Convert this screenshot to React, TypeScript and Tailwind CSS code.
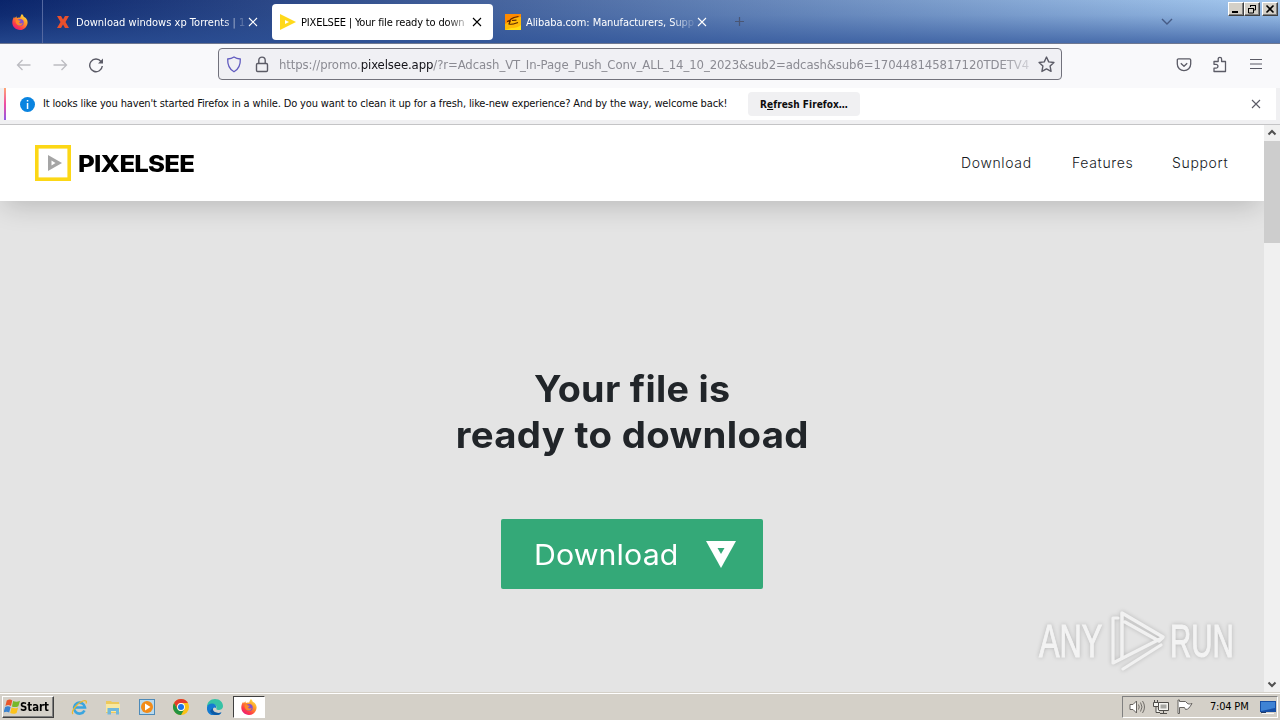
import React from 'react';

const CloseIcon: React.FC<{ className?: string }> = ({ className }) => (
  <svg className={className} width="10" height="10" viewBox="0 0 10 10" fill="none" stroke="currentColor" strokeWidth="1.1">
    <path d="M1 1l8 8M9 1L1 9" />
  </svg>
);

const FirefoxIcon: React.FC = () => (
  <svg width="16" height="16" viewBox="0 0 16 16">
    <defs>
      <linearGradient id="fox" x1="0.9" y1="0" x2="0.2" y2="1">
        <stop offset="0" stopColor="#fff04a" />
        <stop offset="0.4" stopColor="#ff9a26" />
        <stop offset="0.75" stopColor="#ff3b47" />
        <stop offset="1" stopColor="#e31587" />
      </linearGradient>
    </defs>
    <path d="M10 0c1 1 1.600 2 1.900 3 1.100.3 2 .9 2.600 2 .8 1.200 1.200 2.400 1.100 3.700C15.300 12.800 12 16 8 16 3.700 16 .3 12.800.3 8.600.3 6.500 1 4.500 2.200 2.800l.4 1.500C3.200 3.500 3.900 2.700 4.500 2.200l.3 1.900c1-.5 2.200-.7 3.300-.3C8.500 2.300 9 1 10 0z" fill="url(#fox)" />
    <circle cx="8.200" cy="8.600" r="3.500" fill="#8150cf" />
    <path d="M3.500 6.500c1.200-.9 2.500-.9 3.500-.1l1.800.3c-.2 1-1.500 1-1.700 1.700.5 1.300 2.300 1.200 3.600.3-.5 2.300-2.400 3.300-4.100 2.700C4.700 10.800 3.600 9 3.500 6.500z" fill="#ff8a28" />
  </svg>
);

const AlibabaIcon: React.FC = () => (
  <svg width="16" height="16" viewBox="0 0 16 16">
    <path d="M0 0h16v16H0z" fill="#ffba08" />
    <path d="M0 0h16v3C9 3 7 7 4 8l-4 2z" fill="#ff8a00" />
    <path d="M0 16c3-1 6-2 8-2s6-1 8-3v5z" fill="#ffde17" />
    <path d="M2 7.500c2-.2 3-1 4-2.500 2-1.500 4.500-2 7.500-2.500M5.500 6.500L4 10c3 1 6-.5 9-1.500M7 6.500l4.500-.3" fill="none" stroke="#5a2700" strokeWidth="1.200" />
  </svg>
);

interface TabProps {
  icon: React.ReactNode;
  label: string;
  className: string;
  labelClassName: string;
}

const Tab: React.FC<TabProps> = ({ icon, label, className, labelClassName }) => (
  <div className={`flex h-9 shrink-0 items-center ${className}`}>
    <span className="flex w-4 shrink-0 justify-center">{icon}</span>
    <span className={`ml-[5px] shrink-0 pt-[3px] whitespace-nowrap [mask-image:linear-gradient(to_right,#000_86%,rgba(0,0,0,0.1))] ${labelClassName}`}>
      {label}
    </span>
    <CloseIcon className="ml-[2px] shrink-0" />
  </div>
);

const WindowButton: React.FC<{ children: React.ReactNode; className?: string }> = ({ children, className = '' }) => (
  <button
    className={`flex h-[14px] items-center justify-center border border-t-white border-r-[#404040] border-b-[#404040] border-l-white bg-[#d4d0c8] shadow-[inset_-1px_-1px_#808080] ${className}`}
  >
    <svg width="10" height="10" viewBox="0 0 10 10" fill="none" stroke="#000">
      {children}
    </svg>
  </button>
);

const TabStrip: React.FC = () => (
  <div className="flex h-11 items-center border-b border-[#6f7890] bg-[linear-gradient(to_bottom,rgba(45,85,160,0)_0%,rgba(45,85,155,0.15)_35%,rgba(45,82,152,0.72)_100%),linear-gradient(to_right,#0a246a,#a6caf0)] text-[11px] text-white">
    <div className="flex h-full w-[43px] shrink-0 items-center justify-center border-r border-[#5468a0] pr-[2px]">
      <FirefoxIcon />
    </div>
    <Tab
      className="ml-3 w-[205px]"
      labelClassName="w-[170px] tracking-[0.02px]"
      label="Download windows xp Torrents | 1"
      icon={
        <svg width="12" height="12" viewBox="0 0 12 12">
          <path d="M0 0h4l2 3.500L8 0h4L8.500 6l3.500 6H8L6 8.500 4 12H0l3.500-6z" fill="#e8502d" />
        </svg>
      }
    />
    <Tab
      className="ml-3 w-[221px] rounded bg-white pl-2 text-black"
      labelClassName="w-[169px] -tracking-[0.17px]"
      label="PIXELSEE | Your file ready to down"
      icon={
        <svg width="16" height="16" viewBox="0 0 16 16">
          <path d="M0 0l16 8-16 8z" fill="#ffd91a" />
          <path d="M5 6l4 2-4 2z" fill="#fff" />
        </svg>
      }
    />
    <Tab
      className="ml-3 w-[210px]"
      labelClassName="w-[169px] -tracking-[0.08px]"
      label="Alibaba.com: Manufacturers, Supp"
      icon={<AlibabaIcon />}
    />
    <svg className="ml-[19px] shrink-0" width="11" height="11" viewBox="0 0 11 11" stroke="#4a5675" strokeWidth="1.200">
      <path d="M5.500 1v9M1 5.500h9" />
    </svg>
    <svg className="mr-[54px] ml-auto shrink-0" width="14" height="8" viewBox="0 0 14 8" fill="none" stroke="#465b85" strokeWidth="1.400">
      <path d="M2 1l5 5 5-5" />
    </svg>
    <div className="mr-[2px] flex shrink-0 self-start pt-[2px]">
      <WindowButton className="w-4">
        <path d="M1 8h6" strokeWidth="2" />
      </WindowButton>
      <WindowButton className="w-4">
        <path d="M3.500 3V1.500h5V6H7M3 1.500h6M1.500 4.500h5V9h-5zM1 4.500h6" />
      </WindowButton>
      <WindowButton className="ml-[2px] w-4">
        <path d="M1.500 1.500l7 7M8.500 1.500l-7 7" strokeWidth="1.600" />
      </WindowButton>
    </div>
  </div>
);

const NavBar: React.FC = () => (
  <div className="flex h-11 items-start bg-[#f9f9fb] pt-1 text-[#5b5b66]">
    <svg className="mt-[9px] ml-4 shrink-0 text-[#bcbcc1]" width="16" height="16" viewBox="0 0 16 16" fill="none" stroke="currentColor" strokeWidth="1.300">
      <path d="M14.500 8H1.500M6.500 3L1.500 8l5 5" />
    </svg>
    <svg className="mt-[9px] ml-5 shrink-0 text-[#bcbcc1]" width="16" height="16" viewBox="0 0 16 16" fill="none" stroke="currentColor" strokeWidth="1.300">
      <path d="M1.500 8h13M9.500 3l5 5-5 5" />
    </svg>
    <svg className="mt-[9px] ml-5 shrink-0" width="16" height="16" viewBox="0 0 16 16" fill="none" stroke="currentColor" strokeWidth="1.400">
      <path d="M13 4.500A6.300 6.300 0 1 0 14.300 9" />
      <path d="M15 1.500v5H10z" fill="currentColor" stroke="none" />
    </svg>
    <div className="ml-[114px] flex h-8 w-[844px] shrink-0 items-center rounded border border-[#72727c] bg-[#f0f0f4] pl-[7px]">
      <svg className="shrink-0" width="16" height="17" viewBox="0 0 16 17" fill="none" stroke="#625cc0" strokeWidth="1.300">
        <path d="M8 1c2 1.300 4 1.800 6.300 2 .3 6-1.300 10-6.300 12.800C3 13 1.400 9 1.700 3 4 2.800 6 2.300 8 1z" />
      </svg>
      <svg className="ml-3 shrink-0" width="16" height="17" viewBox="0 0 16 17" fill="none" stroke="currentColor" strokeWidth="1.400">
        <rect x="2.500" y="7.500" width="11" height="8" rx="1.200" />
        <path d="M4.800 7.500V4.300a3.200 3.200 0 0 1 6.400 0v3.200" />
      </svg>
      <div className="ml-[9px] w-[750px] shrink-0 pt-px text-[13px] tracking-[-0.1px] whitespace-nowrap text-[#8b8b93] [mask-image:linear-gradient(to_right,#000_96%,rgba(0,0,0,0.3))]">
        https://promo.<span className="text-[#15141a]">pixelsee.app</span>
        /?r=Adcash_VT_In-Page_Push_Conv_ALL_14_10_2023&amp;sub2=adcash&amp;sub6=170448145817120TDETV4
      </div>
      <svg className="ml-[9px] shrink-0" width="17" height="17" viewBox="0 0 16 16" fill="none" stroke="currentColor" strokeWidth="1.300" strokeLinejoin="round">
        <path d="M8 1l2.100 4.500 4.900.6-3.600 3.400.9 5L8 12.100l-4.300 2.400.9-5L1 6.100l4.900-.6z" />
      </svg>
    </div>
    <svg className="mt-[9px] ml-[114px] shrink-0" width="16" height="16" viewBox="0 0 16 16" fill="none" stroke="currentColor" strokeWidth="1.300" strokeLinejoin="round">
      <path d="M2.500 1.800h11c.8 0 1.200.4 1.200 1.200V7a6.700 6.700 0 0 1-13.400 0V3c0-.8.400-1.200 1.200-1.200z" />
      <path d="M4.800 6.200L8 9.200l3.200-3" />
    </svg>
    <svg className="mt-[8px] ml-5 shrink-0" width="16" height="17" viewBox="0 0 16 17" fill="none" stroke="currentColor" strokeWidth="1.300" strokeLinejoin="round">
      <path d="M2 15.500v-3.300h2a1.900 1.900 0 0 0 0-3.900H2V5.500h4.200V3a1.700 1.700 0 0 1 3.400 0v2.500H13.500v10z" />
    </svg>
    <svg className="mt-[8px] ml-5 shrink-0" width="16" height="16" viewBox="0 0 16 16" stroke="currentColor" strokeWidth="1.200">
      <path d="M2 3.500h12M2 8h12M2 12.500h12" />
    </svg>
  </div>
);

const NotificationBar: React.FC = () => (
  <div className="h-[37px] border-b border-[#c4c4c6] bg-[#f0f0f2]">
    <div className="ml-1 flex h-8 w-[1272px] items-center bg-white text-[11px] text-[#0c0c0d]">
      <div className="h-full w-[2px] bg-[linear-gradient(#ffa573,#ef4da2_50%,#9059e5)]" />
      <div className="ml-[14px] flex h-[15px] w-[15px] items-center justify-center rounded-full bg-[#0a84e0]">
        <svg width="3" height="9" viewBox="0 0 3 9" fill="#fff">
          <path d="M.8 0h1.500v1.600H.8zM.8 3h1.500v6H.8z" />
        </svg>
      </div>
      <p className="ml-2 w-[705px] whitespace-nowrap tracking-[-0.143px]">
        It looks like you haven't started Firefox in a while. Do you want to clean it up for a fresh, like-new experience? And by the way, welcome back!
      </p>
      <button className="flex h-6 w-28 items-center justify-center rounded bg-[#f0f0f2] text-[10px] font-bold tracking-[0.05px] whitespace-nowrap">
        R<u>e</u>fresh Firefox…
      </button>
      <CloseIcon className="mr-[15px] ml-auto text-[#5b5b66]" />
    </div>
  </div>
);

const SiteHeader: React.FC = () => (
  <header className="relative flex h-[76px] items-center bg-white pr-[35px] pl-[35px] font-[Inter] shadow-[0_8px_28px_-4px_rgba(0,0,0,0.2)]">
    <svg width="36" height="36" viewBox="0 0 36 36">
      <rect x="1.800" y="1.800" width="32.400" height="32.400" fill="#fff" stroke="#fcd716" strokeWidth="3.600" />
      <path d="M13 10l14 8-14 8z" fill="#a5a5a5" />
      <path d="M16.500 15.500l4 2.500-4 2.500z" fill="#fff" />
    </svg>
    <span className="ml-[7px] w-[110px] origin-left scale-x-[1.12] pt-[2px] text-[23px] font-extrabold tracking-[-0.7px] text-black">PIXELSEE</span>
    <nav className="ml-auto flex gap-10 pb-[2px] text-[14px] font-light text-[#15191d]">
      <a className="w-[71px] tracking-[0.65px]">Download</a>
      <a className="w-[60px] tracking-[0.65px]">Features</a>
      <a className="w-[57px] tracking-[0.65px]">Support</a>
    </nav>
  </header>
);

const Watermark: React.FC = () => (
  <div className="absolute top-[483px] left-[1039px] flex h-[66px] items-center font-['Liberation_Sans'] text-[46px] leading-none text-[#f3f3f3] [filter:drop-shadow(0_0_2px_rgba(0,0,0,0.2))]">
    <span className="w-[67px] origin-left scale-x-[0.67] [-webkit-text-stroke:1px_#f3f3f3]">ANY</span>
    <svg className="mx-[4px]" width="56" height="62" viewBox="0 0 56 62" fill="none" stroke="#f1f1f1" strokeWidth="3.5" strokeLinejoin="round" strokeLinecap="round">
      <path d="M12 48V3l41 24-4 4L15 12" />
      <path d="M8 8H3v45L52 28M13 59l38-24" strokeWidth="3.200" />
    </svg>
    <span className="w-[67px] origin-left scale-x-[0.64] [-webkit-text-stroke:1px_#f3f3f3]">RUN</span>
  </div>
);

const Scrollbar: React.FC = () => (
  <div className="flex w-4 flex-col items-center bg-[#f0f0f0]">
    <svg className="mt-1" width="10" height="7" viewBox="0 0 10 7" fill="none" stroke="#505050" strokeWidth="2">
      <path d="M1.500 5.500L5 2l3.500 3.500" />
    </svg>
    <div className="mt-[5px] h-[102px] w-full bg-[#cdcdcd]" />
    <svg className="mt-auto mb-1" width="10" height="7" viewBox="0 0 10 7" fill="none" stroke="#505050" strokeWidth="2">
      <path d="M1.500 1.500L5 5l3.500-3.500" />
    </svg>
  </div>
);

const PageContent: React.FC = () => (
  <div className="relative flex h-[567px] overflow-hidden">
    <main className="flex w-[1264px] flex-col overflow-hidden bg-[#e4e4e4] font-[Inter]">
      <SiteHeader />
      <div className="flex flex-col items-center pt-[165px]">
        <h1 className="text-center text-[37px] leading-[46px] font-bold text-[#212529]">
          <span className="block scale-x-[1.02] tracking-[0.3px]">Your file is</span>
          <span className="block scale-x-[1.037] tracking-[0.3px]">ready to download</span>
        </h1>
        <button className="mt-[61px] flex h-[70px] w-[262px] items-center rounded-[2px] bg-[#34a978] pl-[33px] text-white">
          <span className="w-[145px] origin-left scale-x-[1.045] pt-[2px] text-left text-[29px] tracking-[0.1px]">Download</span>
          <svg className="ml-[27px]" width="31" height="27" viewBox="0 0 31 27">
            <path d="M0 0h30L15 27z" fill="#fff" />
            <path d="M11.500 7h7L15 13z" fill="#34a978" />
          </svg>
        </button>
      </div>
    </main>
    <Scrollbar />
    <Watermark />
  </div>
);

const StartFlag: React.FC = () => (
  <svg className="shrink-0" width="16" height="16" viewBox="0.500 1.500 14.500 14">
    <path d="M3 2.500c2-1 3.500-1 5 0L6.800 7.500c-1.800-1-3.200-1-5 0z" fill="#e8562a" />
    <path d="M8.800 3c2 1 4 1 6.200-.2l-1.500 5c-2 1-4 1-5.800.2z" fill="#76b82a" />
    <path d="M1.500 8.500c1.800-1 3.300-1 5 0l-1.300 5c-1.800-1-3.400-1-5.200 0z" fill="#3b83d0" />
    <path d="M7.400 9c2 1 4 1 5.900-.1l-1.400 5c-2 1-4 1-5.800.1z" fill="#fcc21b" />
  </svg>
);

const Taskbar: React.FC = () => (
  <footer className="flex h-7 items-start border-t border-[#d4d0c8] bg-[#d4d0c8] text-[11px] text-black shadow-[inset_0_1px_#fff]">
    <button className="mt-[3px] ml-[2px] flex h-[22px] w-[52px] items-center border border-t-white border-r-[#404040] border-b-[#404040] border-l-white pl-[1px] text-[12px] font-bold shadow-[inset_-1px_-1px_#808080]">
      <StartFlag />
      <span className="origin-left scale-x-[0.94]">Start</span>
    </button>
    <svg className="mt-[6px] ml-[17px]" width="17" height="17" viewBox="0 0 17 17" fill="none">
      <path d="M13.500 11.500A5.500 5.500 0 1 1 14 8.500H4" stroke="#3aa5df" strokeWidth="2.600" />
      <path d="M2 15C-.5 13 6 4 12 2c3-1 4 .4 3 2.500" stroke="#edb92e" strokeWidth="1.300" />
    </svg>
    <svg className="mt-[6px] ml-[17px]" width="16" height="16" viewBox="0 0 16 16">
      <path d="M1 2h5l1 1h7v11H1z" fill="#edc95c" />
      <path d="M1 5h14v8H1z" fill="#f9e8a0" />
      <path d="M2.500 15.500V9h11.500v6.500h-3V12H6v3.500z" fill="#71b8dc" />
    </svg>
    <svg className="mt-[6px] ml-[18px]" width="16" height="16" viewBox="0 0 16 16">
      <rect x=".5" y=".5" width="15" height="15" fill="#b9d9ed" stroke="#4d8ab8" />
      <circle cx="8" cy="8" r="6" fill="#f28b18" />
      <path d="M6 4.500l5.500 3.500L6 11.500z" fill="#fff" />
    </svg>
    <svg className="mt-[6px] ml-[18px]" width="16" height="16" viewBox="0 0 16 16">
      <circle cx="8" cy="8" r="8" fill="#fbc116" />
      <path d="M1.070 4A8 8 0 0 1 14.930 4H8a4 4 0 0 0-3.470 6z" fill="#e33b2e" />
      <path d="M1.070 4A8 8 0 0 0 8 16l3.460-6a4 4 0 0 1-6.930 0z" fill="#229342" />
      <circle cx="8" cy="8" r="3.900" fill="#fff" />
      <circle cx="8" cy="8" r="3" fill="#1a73e8" />
    </svg>
    <svg className="mt-[6px] ml-[18px]" width="16" height="16" viewBox="0 0 16 16">
      <path d="M0 8C0 3 3.500 0 8 0c5 0 8 3.500 8 7 0 3-2.500 4-4.500 4S9 10 9.500 9C10 7 8 5 5.500 5S1 6.500 0 8z" fill="#36c2a5" />
      <path d="M0 8c.5-2 2.500-3.500 5-3.500 3 0 5 2.500 4 4.500-1.500-1.500-3.500 0-3 2s3 4 8.500 2.500A8 8 0 0 1 0 8z" fill="#147bd1" />
      <path d="M5.800 9c-.8 4 4 6 8.700 4.500C11 17.500 5 16.500 3 12z" fill="#0c59a4" />
    </svg>
    <div className="mt-[3px] ml-[10px] flex h-[22px] w-8 items-center justify-center border border-t-[#404040] border-r-white border-b-white border-l-[#404040] bg-white">
      <FirefoxIcon />
    </div>
    <div className="mt-[3px] mr-[2px] ml-auto flex h-[22px] w-[156px] items-center border border-t-[#808080] border-r-white border-b-white border-l-[#808080] pl-[6px]">
      <svg width="17" height="16" viewBox="0 0 17 16" fill="#fff" stroke="#65625e">
        <path d="M1 5.500h3L7.500 2v12L4 10.500H1z" />
        <path d="M9.500 5.500q1.500 2.500 0 5M11.500 3.500q3 4.500 0 9M13.500 2q4 6 0 12" fill="none" strokeWidth=".9" />
      </svg>
      <svg className="ml-[7px]" width="16" height="16" viewBox="0 0 16 16" fill="#f4f4f0" stroke="#4f4d49">
        <path d="M5.500 3.500h10v8h-10zM7 14.500h7M10.500 12v2" />
        <path d="M7.500 5.500h6v4h-6z" fill="#a6a6a2" stroke="none" />
        <path d="M.5 3.500h5v4h-5zM1.500 3V1M4.500 3V1M3 8v5.500h4" />
      </svg>
      <svg className="ml-[8px]" width="16" height="16" viewBox="0 0 16 16" fill="#fff" stroke="#65625e">
        <path d="M1 1v13.500h1.500V8.500h5l1 2c3 0 4-2 6.500-6-2 .5-4 1-5-.5L8.500 2.500h-6V1z" />
      </svg>
      <span className="ml-[17px] w-[43px] whitespace-nowrap tracking-[-0.2px]">7:04 PM</span>
      <svg className="ml-[7px] shrink-0" width="16" height="15" viewBox="0 0 16 15">
        <path d="M0 1h16v11H0z" fill="#174fa5" />
        <path d="M1 2h14v6L1 11z" fill="#3f83d5" />
        <path d="M2 13h12v1H2z" fill="#f8f8f8" />
        <path d="M1 12h5v1H1z" fill="#243d66" />
      </svg>
    </div>
  </footer>
);

export default function App() {
  return (
    <div className="h-[720px] w-[1280px] overflow-hidden bg-[#f0f0f0] font-['DejaVu_Sans_Condensed','DejaVu_Sans',sans-serif]">
      <TabStrip />
      <NavBar />
      <NotificationBar />
      <PageContent />
      <Taskbar />
    </div>
  );
}
